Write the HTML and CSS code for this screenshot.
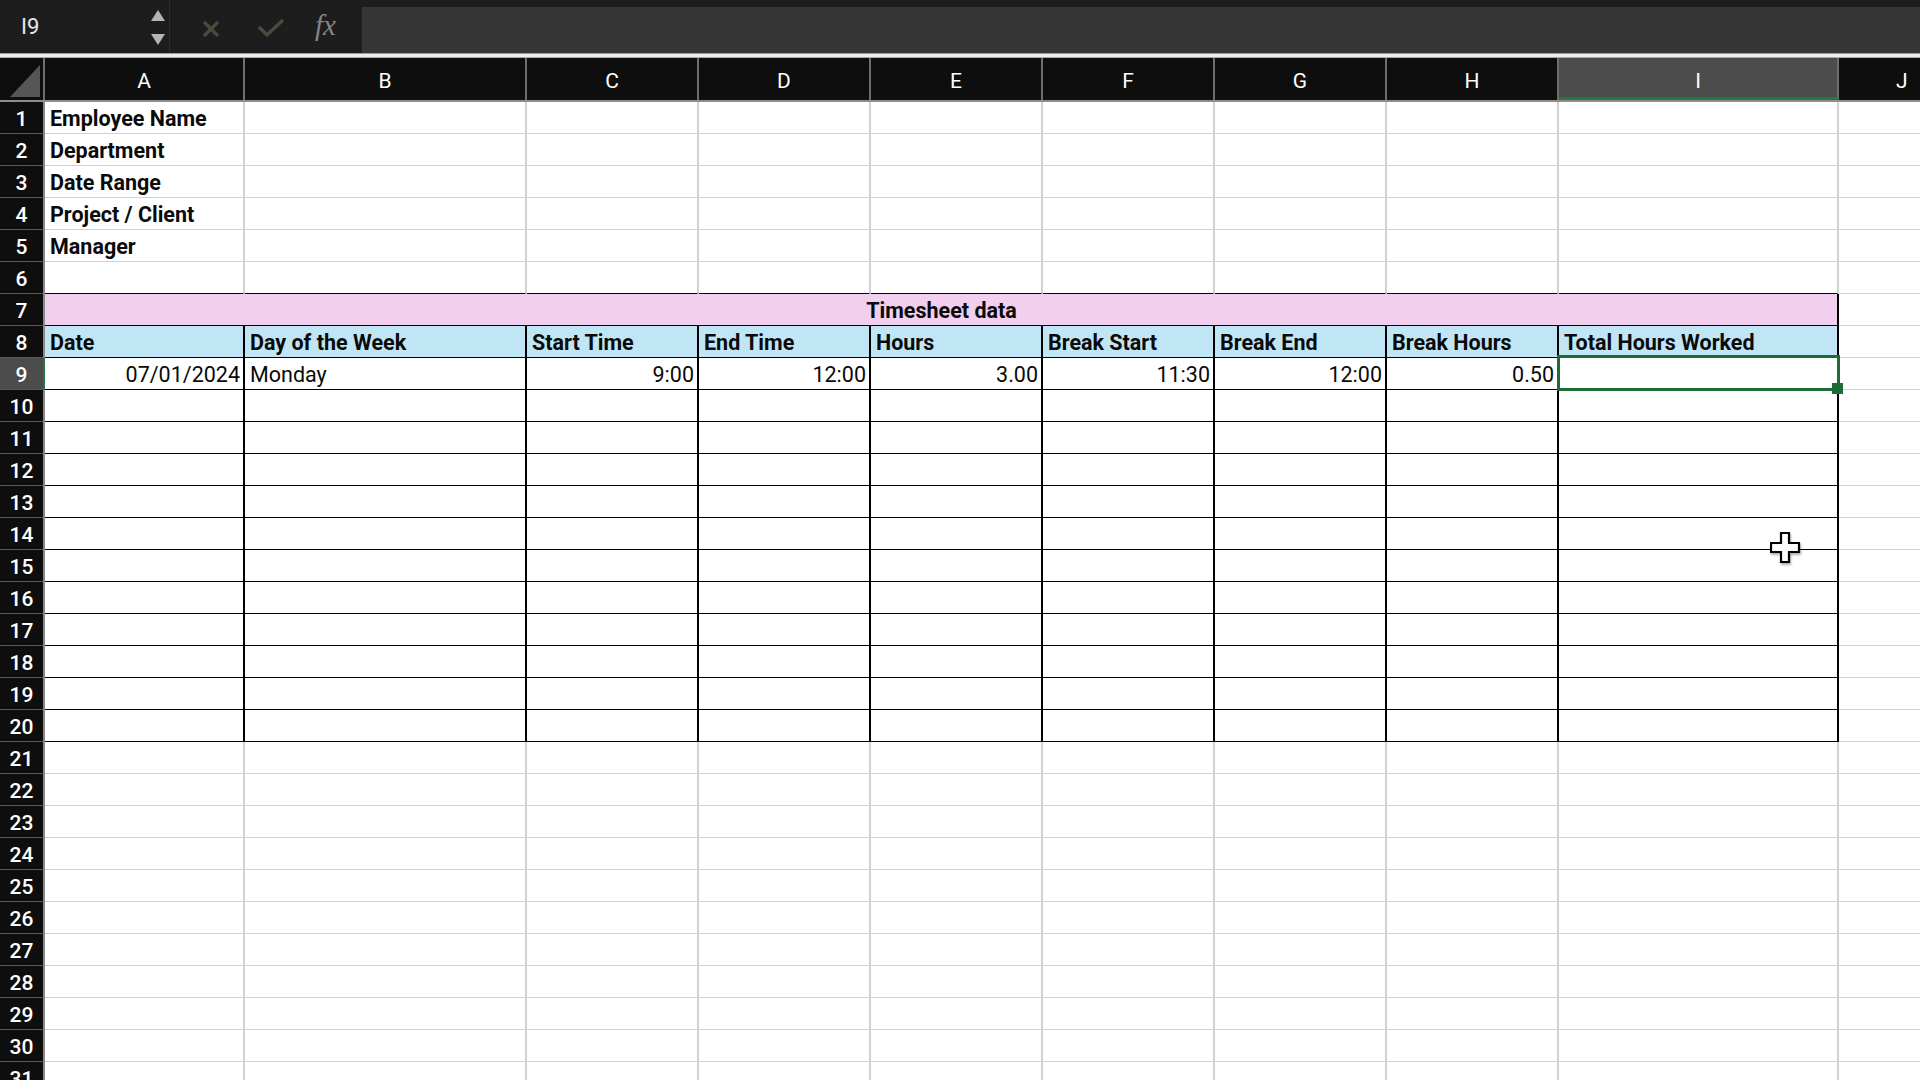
FILE: index.html
```html
<!DOCTYPE html>
<html lang="en">
<head>
<meta charset="utf-8">
<title>Timesheet</title>
<link rel="stylesheet" href="styles.css">
</head>
<body>
<div class="topbar">
  <div class="namebox">
    <span class="cellref">I9</span>
    <svg class="spin" width="16" height="38" viewBox="0 0 16 38"><polygon points="8,1 15,12 1,12" fill="#b4b4b4"/><polygon points="1,25 15,25 8,36" fill="#b4b4b4"/></svg>
  </div>
  <div class="fbtns">
    <svg class="ic-x" width="20" height="20" viewBox="0 0 20 20"><path d="M3 3 L17 17 M17 3 L3 17" stroke="#4a4a3e" stroke-width="3.2" fill="none"/></svg>
    <svg class="ic-ok" width="28" height="22" viewBox="0 0 28 22"><path d="M2 10 L10 18 L26 3" stroke="#4a4a3e" stroke-width="3.4" fill="none"/></svg>
    <span class="fx">fx</span>
  </div>
  <div class="finput"></div>
</div>
<div class="rule"></div>
<div class="colhead">
  <div class="corner"><svg width="45" height="42" viewBox="0 0 45 42"><polygon points="40,7 40,39 10,39" fill="#565656"/></svg></div>
  <div class="ch">A</div><div class="ch">B</div><div class="ch">C</div><div class="ch">D</div><div class="ch">E</div><div class="ch">F</div><div class="ch">G</div><div class="ch">H</div><div class="ch sel">I</div><div class="ch jh">J</div>
</div>

<div class="row"><div class="rh">1</div><div class="c b">Employee Name</div><div class="c"></div><div class="c"></div><div class="c"></div><div class="c"></div><div class="c"></div><div class="c"></div><div class="c"></div><div class="c"></div><div class="c"></div></div>
<div class="row"><div class="rh">2</div><div class="c b">Department</div><div class="c"></div><div class="c"></div><div class="c"></div><div class="c"></div><div class="c"></div><div class="c"></div><div class="c"></div><div class="c"></div><div class="c"></div></div>
<div class="row"><div class="rh">3</div><div class="c b">Date Range</div><div class="c"></div><div class="c"></div><div class="c"></div><div class="c"></div><div class="c"></div><div class="c"></div><div class="c"></div><div class="c"></div><div class="c"></div></div>
<div class="row"><div class="rh">4</div><div class="c b">Project / Client</div><div class="c"></div><div class="c"></div><div class="c"></div><div class="c"></div><div class="c"></div><div class="c"></div><div class="c"></div><div class="c"></div><div class="c"></div></div>
<div class="row"><div class="rh">5</div><div class="c b">Manager</div><div class="c"></div><div class="c"></div><div class="c"></div><div class="c"></div><div class="c"></div><div class="c"></div><div class="c"></div><div class="c"></div><div class="c"></div></div>
<div class="row"><div class="rh">6</div><div class="c u"></div><div class="c u"></div><div class="c u"></div><div class="c u"></div><div class="c u"></div><div class="c u"></div><div class="c u"></div><div class="c u"></div><div class="c u"></div><div class="c"></div></div>
<div class="row"><div class="rh">7</div><div class="c title">Timesheet data</div><div class="c"></div></div>
<div class="row"><div class="rh">8</div><div class="c t hd">Date</div><div class="c t hd">Day of the Week</div><div class="c t hd">Start Time</div><div class="c t hd">End Time</div><div class="c t hd">Hours</div><div class="c t hd">Break Start</div><div class="c t hd">Break End</div><div class="c t hd">Break Hours</div><div class="c t hd">Total Hours Worked</div><div class="c"></div></div>
<div class="row"><div class="rh sel">9</div><div class="c t r">07/01/2024</div><div class="c t">Monday</div><div class="c t r">9:00</div><div class="c t r">12:00</div><div class="c t r">3.00</div><div class="c t r">11:30</div><div class="c t r">12:00</div><div class="c t r">0.50</div><div class="c t selcell"><div class="selbox"><div class="handle"></div></div></div><div class="c"></div></div>
<div class="row"><div class="rh">10</div><div class="c t"></div><div class="c t"></div><div class="c t"></div><div class="c t"></div><div class="c t"></div><div class="c t"></div><div class="c t"></div><div class="c t"></div><div class="c t"></div><div class="c"></div></div>
<div class="row"><div class="rh">11</div><div class="c t"></div><div class="c t"></div><div class="c t"></div><div class="c t"></div><div class="c t"></div><div class="c t"></div><div class="c t"></div><div class="c t"></div><div class="c t"></div><div class="c"></div></div>
<div class="row"><div class="rh">12</div><div class="c t"></div><div class="c t"></div><div class="c t"></div><div class="c t"></div><div class="c t"></div><div class="c t"></div><div class="c t"></div><div class="c t"></div><div class="c t"></div><div class="c"></div></div>
<div class="row"><div class="rh">13</div><div class="c t"></div><div class="c t"></div><div class="c t"></div><div class="c t"></div><div class="c t"></div><div class="c t"></div><div class="c t"></div><div class="c t"></div><div class="c t"></div><div class="c"></div></div>
<div class="row"><div class="rh">14</div><div class="c t"></div><div class="c t"></div><div class="c t"></div><div class="c t"></div><div class="c t"></div><div class="c t"></div><div class="c t"></div><div class="c t"></div><div class="c t"></div><div class="c"></div></div>
<div class="row"><div class="rh">15</div><div class="c t"></div><div class="c t"></div><div class="c t"></div><div class="c t"></div><div class="c t"></div><div class="c t"></div><div class="c t"></div><div class="c t"></div><div class="c t"></div><div class="c"></div></div>
<div class="row"><div class="rh">16</div><div class="c t"></div><div class="c t"></div><div class="c t"></div><div class="c t"></div><div class="c t"></div><div class="c t"></div><div class="c t"></div><div class="c t"></div><div class="c t"></div><div class="c"></div></div>
<div class="row"><div class="rh">17</div><div class="c t"></div><div class="c t"></div><div class="c t"></div><div class="c t"></div><div class="c t"></div><div class="c t"></div><div class="c t"></div><div class="c t"></div><div class="c t"></div><div class="c"></div></div>
<div class="row"><div class="rh">18</div><div class="c t"></div><div class="c t"></div><div class="c t"></div><div class="c t"></div><div class="c t"></div><div class="c t"></div><div class="c t"></div><div class="c t"></div><div class="c t"></div><div class="c"></div></div>
<div class="row"><div class="rh">19</div><div class="c t"></div><div class="c t"></div><div class="c t"></div><div class="c t"></div><div class="c t"></div><div class="c t"></div><div class="c t"></div><div class="c t"></div><div class="c t"></div><div class="c"></div></div>
<div class="row"><div class="rh">20</div><div class="c t"></div><div class="c t"></div><div class="c t"></div><div class="c t"></div><div class="c t"></div><div class="c t"></div><div class="c t"></div><div class="c t"></div><div class="c t"></div><div class="c"></div></div>
<div class="row"><div class="rh">21</div><div class="c"></div><div class="c"></div><div class="c"></div><div class="c"></div><div class="c"></div><div class="c"></div><div class="c"></div><div class="c"></div><div class="c"></div><div class="c"></div></div>
<div class="row"><div class="rh">22</div><div class="c"></div><div class="c"></div><div class="c"></div><div class="c"></div><div class="c"></div><div class="c"></div><div class="c"></div><div class="c"></div><div class="c"></div><div class="c"></div></div>
<div class="row"><div class="rh">23</div><div class="c"></div><div class="c"></div><div class="c"></div><div class="c"></div><div class="c"></div><div class="c"></div><div class="c"></div><div class="c"></div><div class="c"></div><div class="c"></div></div>
<div class="row"><div class="rh">24</div><div class="c"></div><div class="c"></div><div class="c"></div><div class="c"></div><div class="c"></div><div class="c"></div><div class="c"></div><div class="c"></div><div class="c"></div><div class="c"></div></div>
<div class="row"><div class="rh">25</div><div class="c"></div><div class="c"></div><div class="c"></div><div class="c"></div><div class="c"></div><div class="c"></div><div class="c"></div><div class="c"></div><div class="c"></div><div class="c"></div></div>
<div class="row"><div class="rh">26</div><div class="c"></div><div class="c"></div><div class="c"></div><div class="c"></div><div class="c"></div><div class="c"></div><div class="c"></div><div class="c"></div><div class="c"></div><div class="c"></div></div>
<div class="row"><div class="rh">27</div><div class="c"></div><div class="c"></div><div class="c"></div><div class="c"></div><div class="c"></div><div class="c"></div><div class="c"></div><div class="c"></div><div class="c"></div><div class="c"></div></div>
<div class="row"><div class="rh">28</div><div class="c"></div><div class="c"></div><div class="c"></div><div class="c"></div><div class="c"></div><div class="c"></div><div class="c"></div><div class="c"></div><div class="c"></div><div class="c"></div></div>
<div class="row"><div class="rh">29</div><div class="c"></div><div class="c"></div><div class="c"></div><div class="c"></div><div class="c"></div><div class="c"></div><div class="c"></div><div class="c"></div><div class="c"></div><div class="c"></div></div>
<div class="row"><div class="rh">30</div><div class="c"></div><div class="c"></div><div class="c"></div><div class="c"></div><div class="c"></div><div class="c"></div><div class="c"></div><div class="c"></div><div class="c"></div><div class="c"></div></div>
<div class="row"><div class="rh">31</div><div class="c"></div><div class="c"></div><div class="c"></div><div class="c"></div><div class="c"></div><div class="c"></div><div class="c"></div><div class="c"></div><div class="c"></div><div class="c"></div></div>

<svg class="cursor" width="32" height="32" viewBox="0 0 32 32"><polygon points="11,1 19,1 19,11 29,11 29,20 19,20 19,30 11,30 11,20 1,20 1,11 11,11" fill="#fff" stroke="#000" stroke-width="2.2" stroke-linejoin="miter"/></svg>
</body>
</html>
```
FILE: styles.css
```css
* { box-sizing: border-box; }
html, body { margin: 0; padding: 0; }
body {
  width: 1920px;
  height: 1080px;
  overflow: hidden;
  position: relative;
  background: #ffffff;
  font-family: Roboto, "Liberation Sans", sans-serif;
  --cols: 45px 200px 282px 172px 172px 172px 172px 172px 172px 280px 130px;
}

/* formula bar */
.topbar { display: flex; height: 53px; background: #1d1d1d; }
.namebox {
  width: 170px;
  display: flex;
  align-items: center;
  justify-content: space-between;
  padding: 0 3px 0 21px;
  border-right: 1px dotted #3c3c3c;
}
.cellref { color: #e8e8e8; font-size: 22px; }
.spin { margin-top: 2px; }
.fbtns {
  width: 192px;
  display: flex;
  align-items: center;
  padding-left: 31px;
}
.ic-x { margin-top: 4px; }
.ic-ok { margin-left: 36px; margin-top: 3px; }
.fx {
  margin-left: 30px;
  font-family: "Liberation Serif", "DejaVu Serif", serif;
  font-style: italic;
  font-size: 29px;
  color: #858585;
  margin-top: -2px;
}
.finput { flex: 1; margin-top: 7px; background: #353535; }
.rule {
  height: 5px;
  background: #eeeeee;
  border-top: 1px solid #9c9c9c;
  border-bottom: 1px solid #a8a8a8;
}

/* column headers */
.colhead {
  display: grid;
  grid-template-columns: var(--cols);
  height: 44px;
  background: #0e0e0e;
  border-bottom: 2px solid #8e8e8e;
}
.corner { border-right: 2px solid #6e6e6e; }
.corner svg { display: block; }
.ch {
  color: #ffffff;
  font-size: 21px;
  display: flex;
  align-items: center;
  justify-content: center;
  padding-top: 3px;
  border-right: 2px solid #6e6e6e;
}
.ch.sel { background: #4c4c4c; border-bottom: 3px solid #1f7a3c; padding-top: 6px; }
.ch.jh { justify-content: flex-start; padding-left: 57px; }

/* grid rows */
.row {
  display: grid;
  grid-template-columns: var(--cols);
  height: 32px;
}
.rh {
  background: #0e0e0e;
  color: #ffffff;
  font-size: 21px;
  font-weight: 500;
  text-align: center;
  line-height: 28px;
  padding-top: 3px;
  border-right: 2px solid #8a8a8a;
  border-bottom: 2px solid #585858;
}
.rh.sel { background: #4c4c4c; border-right: 2px solid #1f7a3c; }
.c {
  border-right: 2px solid #d2d2d2;
  border-bottom: 2px solid #d2d2d2;
  padding: 3px 4px 0 5px;
  font-size: 21.5px;
  line-height: 27px;
  color: #0a0a0a;
  white-space: nowrap;
  overflow: hidden;
  background: #ffffff;
}
.c.b { font-weight: 700; }
.c.r { text-align: right; padding-right: 3px; }
.c.u { border-bottom: 2px solid #000; }
.c.t { border-right: 2px solid #000; border-bottom: 2px solid #000; }
.c.title {
  grid-column: span 9;
  background: #f2ceef;
  text-align: center;
  font-weight: 700;
  border-right: 2px solid #000;
  border-bottom: 2px solid #000;
}
.c.hd { background: #c0e6f5; font-weight: 700; }
.c.selcell { position: relative; overflow: visible; }
.selbox {
  position: absolute;
  top: -3px;
  left: -2px;
  right: -3px;
  bottom: -2px;
  border: 3px solid #1e6b36;
}
.handle {
  position: absolute;
  width: 11px;
  height: 11px;
  right: -6px;
  bottom: -6px;
  background: #1e6b36;
}

.cursor {
  position: absolute;
  left: 1770px;
  top: 532px;
  filter: drop-shadow(1px 2px 1px rgba(0,0,0,0.3));
}
```
